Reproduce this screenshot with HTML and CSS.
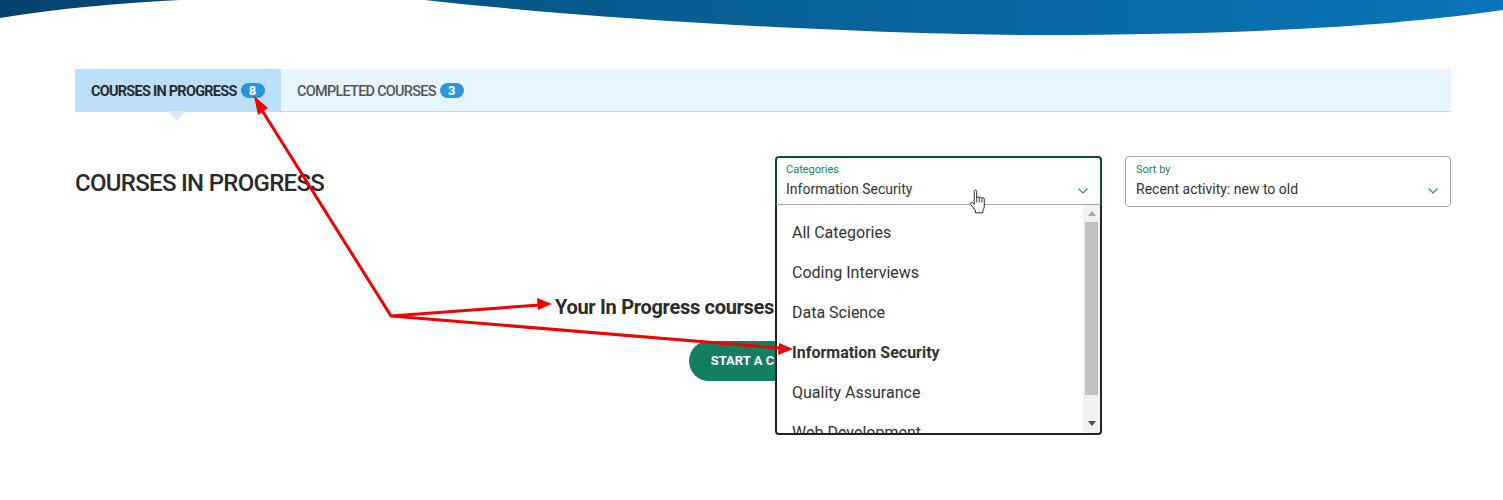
FILE: index.html
```html
<!DOCTYPE html>
<html lang="en">
<head>
    <meta charset="UTF-8">
    <title>My Courses</title>
    <link rel="stylesheet" href="styles.css">
</head>
<body>
    <!-- Wave banner -->
    <svg class="wave" width="1503" height="36" viewBox="0 0 1503 36">
        <defs>
            <linearGradient id="waveFill" x1="0" y1="0" x2="1" y2="0">
                <stop offset="0" stop-color="#06426f"/>
                <stop offset="0.5" stop-color="#076095"/>
                <stop offset="1" stop-color="#0a75b9"/>
            </linearGradient>
        </defs>
        <path fill="url(#waveFill)" d="M0 0H180C120 3 60 8 0 18ZM425 0H1503V10C1380 28 1220 35 1040 35C880 35 600 20 425 0Z"/>
    </svg>

    <div class="main-container">
        <ul class="tabs">
            <li class="tab tab-active">COURSES IN PROGRESS <span class="badge">8</span></li>
            <li class="tab">COMPLETED COURSES <span class="badge">3</span></li>
        </ul>

        <div class="toolbar">
            <h2 class="section-title">COURSES IN PROGRESS</h2>
            <div class="filters">
                <div class="select select-open">
                    <span class="select-label">Categories</span>
                    <span class="select-value">Information Security</span>
                    <svg class="chevron" width="12" height="8" viewBox="0 0 12 8"><path d="M1.5 1.5 6 6l4.5-4.5" fill="none" stroke="#2f9178" stroke-width="1.2"/></svg>
                    <div class="dropdown">
                        <ul class="dropdown-list">
                            <li>All Categories</li>
                            <li>Coding Interviews</li>
                            <li>Data Science</li>
                            <li class="selected">Information Security</li>
                            <li>Quality Assurance</li>
                            <li>Web Development</li>
                        </ul>
                        <div class="scrollbar">
                            <span class="arrow-up"></span>
                            <span class="thumb"></span>
                            <span class="arrow-down"></span>
                        </div>
                    </div>
                </div>
                <div class="select">
                    <span class="select-label">Sort by</span>
                    <span class="select-value">Recent activity: new to old</span>
                    <svg class="chevron" width="12" height="8" viewBox="0 0 12 8"><path d="M1.5 1.5 6 6l4.5-4.5" fill="none" stroke="#2f9178" stroke-width="1.2"/></svg>
                </div>
            </div>
        </div>

        <div class="empty-state">
            <p class="empty-text">Your In Progress courses will be displayed here.</p>
            <a class="btn-start" href="#">START A COURSE</a>
        </div>
    </div>

    <!-- Annotation arrows -->
    <svg class="arrows" width="1503" height="500" viewBox="0 0 1503 500">
        <path d="M258 104 391 316 540 305M391 316 780 348" fill="none" stroke="#f00000" stroke-width="3"/>
        <path d="M254 96 268 108 258 115Z M552 304 537 298 538 310Z M793 349 779 343 778 355Z" fill="#f00000"/>
    </svg>

    <!-- Hand cursor -->
    <svg class="cursor" width="18" height="26" viewBox="0 0 16 24">
        <path d="M4.500 2.200c0-1.500 2.300-1.500 2.300 0v6c.3-1.300 2.200-1.300 2.400.2.300-1.200 2.200-1.100 2.400.3.400-1 2.100-.8 2.200.6v6.200c0 2-.6 3-1.300 4.200v2.300H5.700v-2C4.500 18.300 3 16.500 1.300 14.300c-1-1.400.7-2.800 1.900-1.500l1.300 1.400Z" fill="#fff" stroke="#222" stroke-width=".9" stroke-linejoin="round"/>
        <path d="M6.800 8v4.500M9.200 8.500v4M11.600 8.800v3.700" fill="none" stroke="#222" stroke-width=".8"/>
    </svg>
</body>
</html>
```

FILE: styles.css
```css
/* General */
* {
    margin: 0;
    padding: 0;
    box-sizing: border-box;
}
body {
    font-family: Roboto, Arial, sans-serif;
    background-color: #fff;
    color: #2b2b2b;
    min-height: 500px;
    overflow: hidden;
}

/* Overlays */
.wave {
    position: absolute;
    top: 0;
    left: 0;
}
.arrows {
    position: absolute;
    top: 0;
    left: 0;
    z-index: 20;
    pointer-events: none;
}
.cursor {
    position: absolute;
    top: 189px;
    left: 969px;
    z-index: 30;
}

.main-container {
    padding: 69px 52px 0 75px;
}

/* Tabs */
.tabs {
    list-style: none;
    display: flex;
    height: 43px;
    background-color: #e7f5fe;
    border-bottom: 1px solid #cfd6dc;
}
.tab {
    position: relative;
    display: flex;
    align-items: center;
    gap: 4px;
    height: 42px;
    padding: 2px 16px 0;
    font-size: 14.5px;
    font-weight: 500;
    letter-spacing: -0.75px;
    color: #555;
    white-space: nowrap;
}
.tab-active {
    width: 206px;
    background-color: #bbdff8;
    color: #2b2b2b;
    font-weight: 700;
    letter-spacing: -0.75px;
}
.tab-active::after {
    content: "";
    position: absolute;
    left: 93px;
    bottom: -10px;
    border-left: 9px solid transparent;
    border-right: 9px solid transparent;
    border-top: 10px solid #d9e9f5;
}
.badge {
    flex-shrink: 0;
    width: 24px;
    height: 15px;
    margin-top: -1px;
    border-radius: 8px;
    background-color: #2b96dc;
    color: #fff;
    font-size: 13px;
    font-weight: 700;
    letter-spacing: 0;
    line-height: 15px;
    text-align: center;
}

/* Title and filters */
.toolbar {
    display: flex;
    justify-content: space-between;
    align-items: flex-start;
    margin-top: 44px;
}
.section-title {
    margin-top: 13px;
    font-size: 24px;
    font-weight: 500;
    letter-spacing: -0.7px;
    line-height: 29px;
}
.filters {
    display: flex;
    gap: 23px;
}
.select {
    position: relative;
    width: 326px;
    height: 51px;
    padding: 6px 10px;
    border: 1px solid #a8a8a8;
    border-radius: 4px;
}
.select-open {
    width: 327px;
    height: 49px;
    border: 2px solid #0b4a3c;
    border-bottom: 1px solid #a8a8a8;
    border-radius: 4px 4px 0 0;
    padding: 5px 9px;
}
.select-label {
    display: block;
    font-size: 11px;
    line-height: 13px;
    color: #1a7f64;
}
.select-value {
    display: block;
    margin-top: 4px;
    font-size: 14px;
    line-height: 18px;
    color: #333;
}
.chevron {
    position: absolute;
    right: 11px;
    top: 30px;
}
.select-open .chevron {
    top: 29px;
}

/* Open dropdown */
.dropdown {
    position: absolute;
    top: 47px;
    left: -2px;
    z-index: 10;
    display: flex;
    width: 327px;
    height: 230px;
    background-color: #fff;
    border: 2px solid #222;
    border-top: none;
    border-radius: 0 0 4px 4px;
    overflow: hidden;
}
.dropdown-list {
    flex: 1;
    list-style: none;
    padding-top: 8px;
    overflow: hidden;
}
.dropdown-list li {
    height: 40px;
    padding-left: 15px;
    font-size: 16px;
    line-height: 40px;
    color: #333;
}
.dropdown-list .selected {
    font-weight: 700;
}
.scrollbar {
    display: flex;
    flex-direction: column;
    align-items: center;
    width: 17px;
    background-color: #f1f1f1;
}
.thumb {
    width: 13px;
    height: 173px;
    margin-top: 6px;
    margin-bottom: 26px;
    background-color: #c1c1c1;
}
.arrow-up {
    margin-top: 6px;
    border-left: 4px solid transparent;
    border-right: 4px solid transparent;
    border-bottom: 5px solid #a3a3a3;
}
.arrow-down {
    border-left: 4px solid transparent;
    border-right: 4px solid transparent;
    border-top: 5px solid #505050;
}

/* Empty state */
.empty-state {
    display: flex;
    flex-direction: column;
    align-items: center;
    margin-top: 88px;
}
.empty-text {
    font-size: 20px;
    font-weight: 700;
    letter-spacing: -0.3px;
    line-height: 24px;
}
.btn-start {
    margin-top: 22px;
    width: 148px;
    height: 40px;
    border-radius: 20px;
    background-color: #147e60;
    color: #fff;
    font-size: 13px;
    font-weight: 700;
    line-height: 40px;
    text-align: center;
    text-decoration: none;
}
```
